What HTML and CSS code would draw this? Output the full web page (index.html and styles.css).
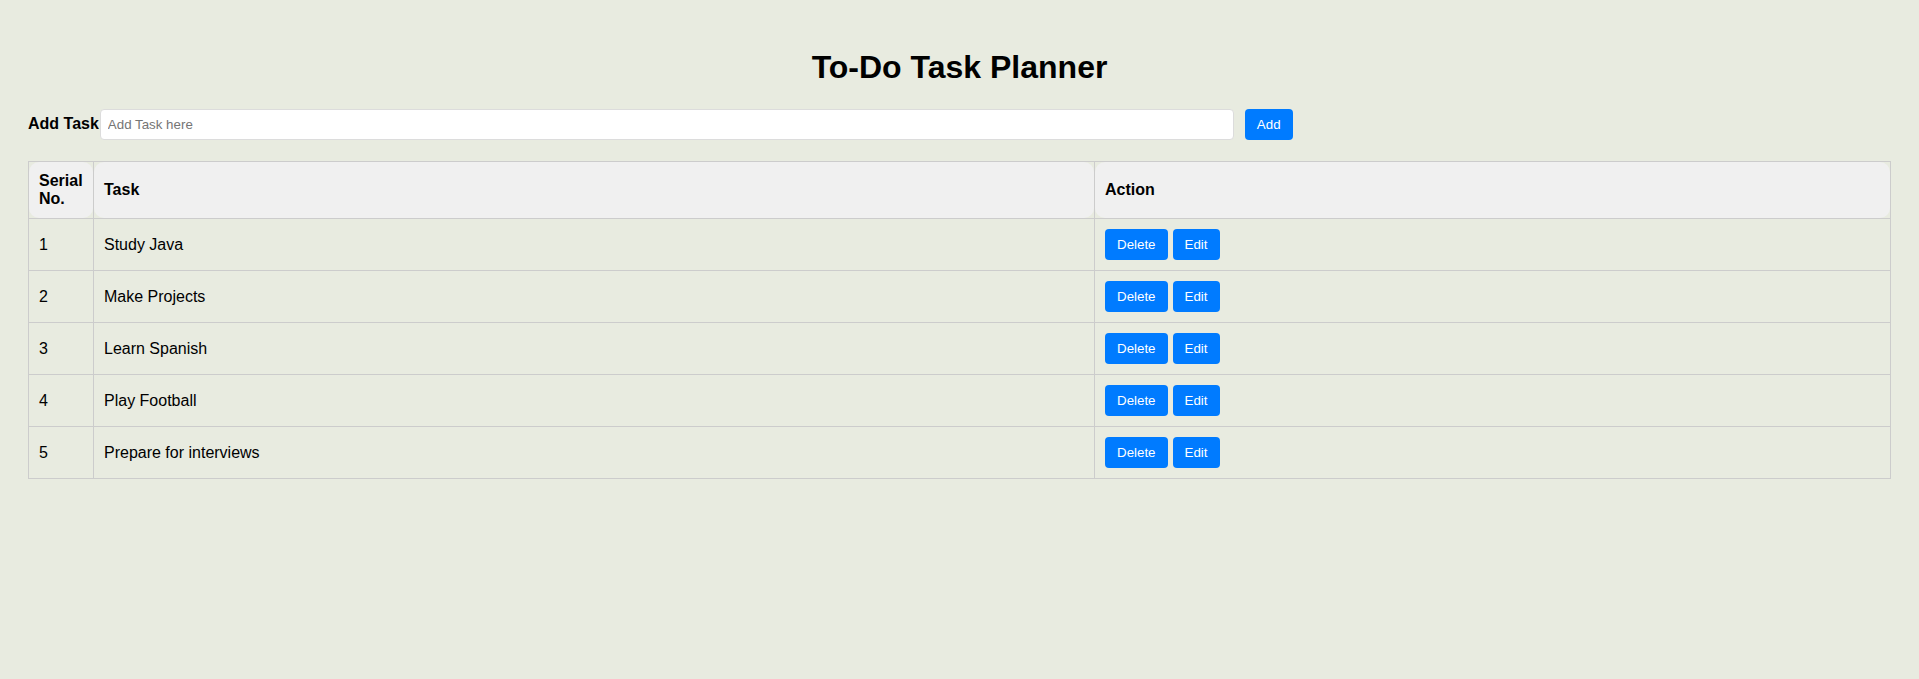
FILE: index.html
```html
<!DOCTYPE html>
<html lang="en">
<head>
<meta charset="utf-8">
<title>To-Do Task Planner</title>
<link rel="stylesheet" href="styles.css">
</head>
<body>
<div class="app">
  <h1 class="title">To-Do Task Planner</h1>
  <div class="add-row">
    <label class="add-label" for="task">Add Task</label>
    <input class="add-input" id="task" type="text" placeholder="Add Task here">
    <button class="btn">Add</button>
  </div>
  <table class="tasks">
    <colgroup>
      <col class="col-serial">
      <col class="col-task">
      <col class="col-action">
    </colgroup>
    <thead>
      <tr><th>Serial No.</th><th>Task</th><th>Action</th></tr>
    </thead>
    <tbody>
      <tr><td>1</td><td>Study Java</td><td><button class="btn">Delete</button><button class="btn">Edit</button></td></tr>
      <tr><td>2</td><td>Make Projects</td><td><button class="btn">Delete</button><button class="btn">Edit</button></td></tr>
      <tr><td>3</td><td>Learn Spanish</td><td><button class="btn">Delete</button><button class="btn">Edit</button></td></tr>
      <tr><td>4</td><td>Play Football</td><td><button class="btn">Delete</button><button class="btn">Edit</button></td></tr>
      <tr><td>5</td><td>Prepare for interviews</td><td><button class="btn">Delete</button><button class="btn">Edit</button></td></tr>
    </tbody>
  </table>
</div>
</body>
</html>
```

FILE: styles.css
```css
html, body {
  margin: 0;
  padding: 0;
  background: #e8ebe0;
}
body {
  font-family: "Liberation Sans", Arial, sans-serif;
  color: #000;
}
.app {
  padding: 49px 28px 0;
}
.title {
  margin: 0;
  font-size: 32px;
  line-height: 37px;
  font-weight: bold;
  text-align: center;
}
.add-row {
  display: flex;
  align-items: center;
  margin-top: 23px;
  height: 31px;
}
.add-label {
  font-size: 16px;
  font-weight: bold;
  margin-right: 1px;
  position: relative;
  top: -1px;
}
.add-input {
  width: 1134px;
  height: 31px;
  box-sizing: border-box;
  border: 1px solid #dcdcdc;
  border-radius: 4px;
  background: #fff;
  padding: 0 7px;
  font-family: "Liberation Sans", Arial, sans-serif;
  font-size: 13.33px;
  color: #000;
  outline: none;
}
.add-input::placeholder {
  color: #757575;
}
.add-row .btn {
  margin-left: 11px;
}
.btn {
  background: #007bff;
  color: #fff;
  border: none;
  border-radius: 4px;
  height: 31px;
  padding: 0 12px;
  font-family: "Liberation Sans", Arial, sans-serif;
  font-size: 13.33px;
  cursor: pointer;
}
.tasks td .btn + .btn {
  margin-left: 5px;
}
.tasks {
  width: 100%;
  margin-top: 21px;
  border-collapse: collapse;
  table-layout: fixed;
  font-size: 16px;
}
.col-serial { width: 65px; }
.col-task { width: 1001px; }
.tasks th, .tasks td {
  border: 1px solid #cccccc;
  padding: 10px;
  text-align: left;
  vertical-align: middle;
}
.tasks th {
  position: relative;
  isolation: isolate;
  font-weight: bold;
}
.tasks th::before {
  content: "";
  position: absolute;
  inset: 0;
  background: #f0f0f0;
  border-radius: 10px;
  z-index: -1;
}
.tasks td {
  height: 31px;
}
```
